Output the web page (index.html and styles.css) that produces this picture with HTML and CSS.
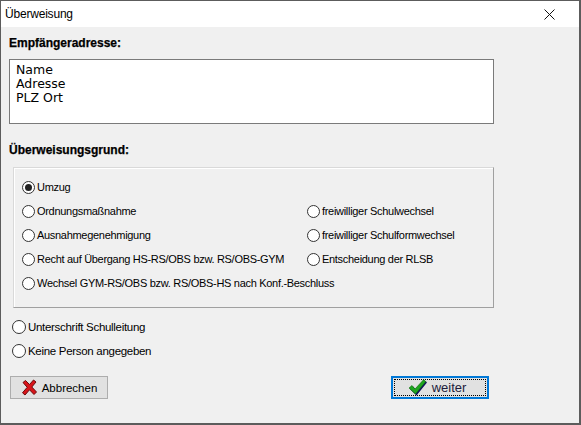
FILE: index.html
```html
<!DOCTYPE html>
<html lang="de">
<head>
<meta charset="utf-8">
<title>Überweisung</title>
<link rel="stylesheet" href="styles.css">
</head>
<body>
<div class="window">
  <div class="titlebar">
    <span class="title">Überweisung</span>
    <svg class="close" width="11" height="11" viewBox="0 0 11 11"><path d="M0.5 0.5L10.5 10.5M10.5 0.5L0.5 10.5" stroke="#111" stroke-width="1" fill="none"/></svg>
  </div>
  <div class="client">
    <div class="heading">Empfängeradresse:</div>
    <div class="address">
      <div>Name</div>
      <div>Adresse</div>
      <div>PLZ Ort</div>
    </div>
    <div class="heading heading-reason">Überweisungsgrund:</div>
    <div class="groupbox">
      <label class="radio"><span class="dot checked"></span>Umzug</label>
      <span></span>
      <label class="radio"><span class="dot"></span>Ordnungsmaßnahme</label>
      <label class="radio"><span class="dot"></span>freiwilliger Schulwechsel</label>
      <label class="radio"><span class="dot"></span>Ausnahmegenehmigung</label>
      <label class="radio"><span class="dot"></span>freiwilliger Schulformwechsel</label>
      <label class="radio"><span class="dot"></span>Recht auf Übergang HS-RS/OBS bzw. RS/OBS-GYM</label>
      <label class="radio"><span class="dot"></span>Entscheidung der RLSB</label>
      <label class="radio wide"><span class="dot"></span>Wechsel GYM-RS/OBS bzw. RS/OBS-HS nach Konf.-Beschluss</label>
    </div>
    <div class="signers">
      <label class="radio big"><span class="dot"></span>Unterschrift Schulleitung</label>
      <label class="radio big"><span class="dot"></span>Keine Person angegeben</label>
    </div>
    <div class="buttons">
      <button class="btn">
        <svg class="icon" width="17" height="17" viewBox="0 0 17 17">
          <path d="M2 3.5L4.5 1.5L8.5 5.5L12.5 1L15 3L10.8 8L15.5 13L13 15.5L8.5 10.8L4 16L1.5 13.8L6.2 8.3Z" fill="#d8141a" stroke="#6a0a0c" stroke-width="1" stroke-linejoin="round"/>
        </svg>
        <span>Abbrechen</span>
      </button>
      <button class="btn default">
        <span class="focus">
          <svg class="icon check" width="20" height="18" viewBox="0 0 20 18">
            <path d="M2 10L5 7.5L8 11L16.5 1.5L19 3.5L8.5 16.5Z" fill="#101060"/>
            <path d="M1 9L4 6.5L7 10L15.5 0.8L17.8 2.6L7.5 15Z" fill="#1fa61f" stroke="#0c6a0c" stroke-width="0.6"/>
          </svg>
          <span class="weiter">weiter</span>
        </span>
      </button>
    </div>
  </div>
</div>
</body>
</html>
```
FILE: styles.css
```css
html, body {
  margin: 0;
  padding: 0;
  background: #f0f0f0;
}

.window {
  width: 581px;
  height: 425px;
  box-sizing: border-box;
  border: 1px solid #5c5c5c;
  border-right-width: 2px;
  border-bottom-width: 2px;
  background: #f0f0f0;
  display: flex;
  flex-direction: column;
  font-family: "Liberation Sans", Arial, sans-serif;
  color: #000;
}

.titlebar {
  height: 26px;
  flex: none;
  background: #fff;
  display: flex;
  align-items: center;
  justify-content: space-between;
  padding: 0 24px 0 4px;
}

.title {
  font-size: 12px;
  letter-spacing: -0.2px;
}

.close {
  display: block;
}

.client {
  flex: 1;
  padding: 8px 0 0 8px;
  display: flex;
  flex-direction: column;
  align-items: flex-start;
}

.heading {
  font-weight: bold;
  font-size: 12px;
  line-height: 16px;
  height: 16px;
  -webkit-text-stroke: 0.25px #000;
}

.address {
  margin-top: 8px;
  width: 485px;
  height: 65px;
  box-sizing: border-box;
  background: #fff;
  border: 1px solid #7a7a7a;
  padding: 3px 6px;
  font-family: "DejaVu Sans", Verdana, sans-serif;
  font-size: 12.5px;
  line-height: 14px;
}

.heading-reason {
  margin-top: 18px;
}

.groupbox {
  margin: 9px 0 0 4px;
  width: 481px;
  height: 141px;
  box-sizing: border-box;
  border: 1px solid #a0a0a0;
  border-top-color: #d9d9d9;
  border-left-color: #d9d9d9;
  box-shadow: inset 1px 1px 0 #fff;
  padding: 7px 0 0 8px;
  display: grid;
  grid-template-columns: 285px 1fr;
  grid-auto-rows: 24px;
}

.radio {
  display: flex;
  align-items: center;
  font-size: 11px;
  letter-spacing: -0.3px;
  white-space: nowrap;
}

.radio.wide {
  grid-column: 1 / 3;
}

.dot {
  width: 13px;
  height: 13px;
  box-sizing: border-box;
  border: 1px solid #333;
  border-radius: 50%;
  background: #fff;
  margin-right: 2px;
  display: flex;
  align-items: center;
  justify-content: center;
  flex: none;
}

.dot.checked::after {
  content: "";
  width: 7px;
  height: 7px;
  border-radius: 50%;
  background: #222;
}

.signers {
  margin: 7px 0 0 3px;
  display: flex;
  flex-direction: column;
}

.radio.big {
  height: 24px;
  font-size: 11.5px;
  letter-spacing: -0.3px;
}

.radio.big .dot {
  width: 14px;
  height: 14px;
  margin-right: 2px;
}

.buttons {
  margin: 13px 0 0 1px;
  width: 479px;
  display: flex;
  justify-content: space-between;
}

.btn {
  width: 98px;
  height: 23px;
  box-sizing: border-box;
  border: 1px solid #adadad;
  background: #e1e1e1;
  padding: 0;
  margin: 0;
  display: flex;
  align-items: center;
  justify-content: center;
  gap: 4px;
  font-family: "Liberation Sans", Arial, sans-serif;
  font-size: 11.5px;
  color: #000;
}

.btn .icon {
  display: block;
  flex: none;
}

.btn.default {
  border: 2px solid #0078d7;
  padding: 1px;
}

.focus {
  flex: 1;
  align-self: stretch;
  border: 1px dotted #000;
  display: flex;
  align-items: center;
  justify-content: center;
  gap: 4px;
  padding-right: 6px;
}

.weiter {
  font-size: 13px;
  color: #1c1c3c;
}
```
